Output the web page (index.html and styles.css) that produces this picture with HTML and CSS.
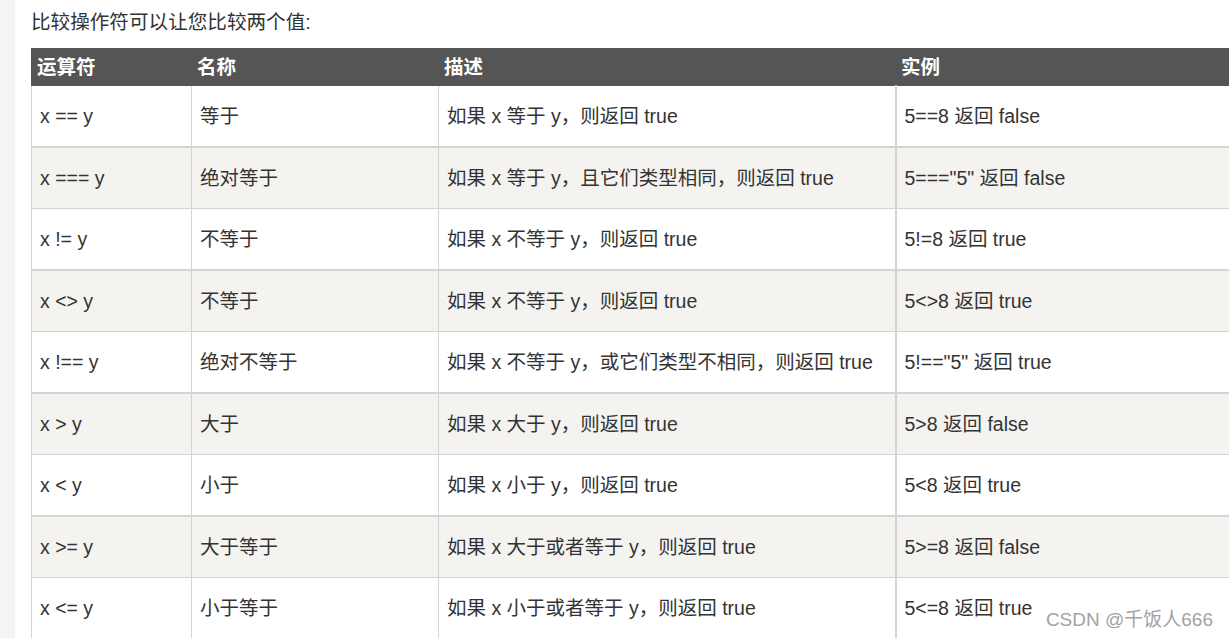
FILE: index.html
```html
<!DOCTYPE html>
<html lang="zh-CN">
<head>
<meta charset="utf-8">
<title>比较操作符</title>
<link rel="stylesheet" href="styles.css">
</head>
<body>
<div class="page">
  <div class="side"></div>
  <main class="content">
    <p class="intro">比较操作符可以让您比较两个值:</p>
    <table class="reference">
      <colgroup>
        <col class="c1"><col class="c2"><col class="c3"><col class="c4">
      </colgroup>
      <thead>
        <tr><th>运算符</th><th>名称</th><th>描述</th><th class="last">实例</th></tr>
      </thead>
      <tbody>
        <tr><td>x == y</td><td>等于</td><td>如果 x 等于 y，则返回 true</td><td class="last">5==8 返回 false</td></tr>
        <tr class="alt"><td>x === y</td><td>绝对等于</td><td>如果 x 等于 y，且它们类型相同，则返回 true</td><td class="last">5==="5" 返回 false</td></tr>
        <tr><td>x != y</td><td>不等于</td><td>如果 x 不等于 y，则返回 true</td><td class="last">5!=8 返回 true</td></tr>
        <tr class="alt"><td>x &lt;&gt; y</td><td>不等于</td><td>如果 x 不等于 y，则返回 true</td><td class="last">5&lt;&gt;8 返回 true</td></tr>
        <tr><td>x !== y</td><td>绝对不等于</td><td>如果 x 不等于 y，或它们类型不相同，则返回 true</td><td class="last">5!=="5" 返回 true</td></tr>
        <tr class="alt"><td>x &gt; y</td><td>大于</td><td>如果 x 大于 y，则返回 true</td><td class="last">5&gt;8 返回 false</td></tr>
        <tr><td>x &lt; y</td><td>小于</td><td>如果 x 小于 y，则返回 true</td><td class="last">5&lt;8 返回 true</td></tr>
        <tr class="alt"><td>x &gt;= y</td><td>大于等于</td><td>如果 x 大于或者等于 y，则返回 true</td><td class="last">5&gt;=8 返回 false</td></tr>
        <tr><td>x &lt;= y</td><td>小于等于</td><td>如果 x 小于或者等于 y，则返回 true</td><td class="last">5&lt;=8 返回 true</td></tr>
      </tbody>
    </table>
  </main>
</div>
<div class="watermark">CSDN @千饭人666</div>
</body>
</html>
```

FILE: styles.css
```css
html, body {
  margin: 0;
  padding: 0;
  overflow: hidden;
  background: #fff;
}
body {
  font-family: "Liberation Sans", "Noto Sans CJK SC", sans-serif;
  color: #333;
  height: 638px;
  position: relative;
}
.page {
  display: flex;
  height: 100%;
}
.side {
  width: 15px;
  flex: 0 0 15px;
  background: #f4f4f4;
}
.content {
  flex: 1 1 auto;
  padding-left: 16px;
  min-width: 0;
}
.intro {
  margin: 0;
  padding: 7px 0 10px;
  font-size: 19.6px;
  line-height: 31px;
  color: #333;
  white-space: nowrap;
}
.reference {
  border-collapse: collapse;
  table-layout: fixed;
  width: 1199px;
  border: 1px solid #d4d4d4;
  font-size: 19.5px;
}
.c1 { width: 160px; }
.c2 { width: 247px; }
.c3 { width: 457px; }
.c4 { width: 335px; }
.reference th {
  background: #555;
  color: #fff;
  font-weight: bold;
  text-align: left;
  height: 37px;
  padding: 0 5px;
  line-height: 24px;
  border: 1px solid #555;
  box-sizing: border-box;
}
.reference td {
  height: 61.45px;
  padding: 0 8px;
  border: 1px solid #d4d4d4;
  line-height: 26px;
  white-space: nowrap;
  box-sizing: border-box;
}
.reference tr.alt td {
  background: #f4f3f0;
  border-top: 2px solid #d4d4d4;
}
.reference td.last {
  border-left: 2px solid #d4d4d4;
}
.watermark {
  position: absolute;
  right: 16px;
  bottom: 7px;
  font-size: 19px;
  color: #a3a3a3;
  text-shadow: 0 0 2px #fff;
  font-family: "Liberation Sans", "Noto Sans CJK SC", sans-serif;
}
```
